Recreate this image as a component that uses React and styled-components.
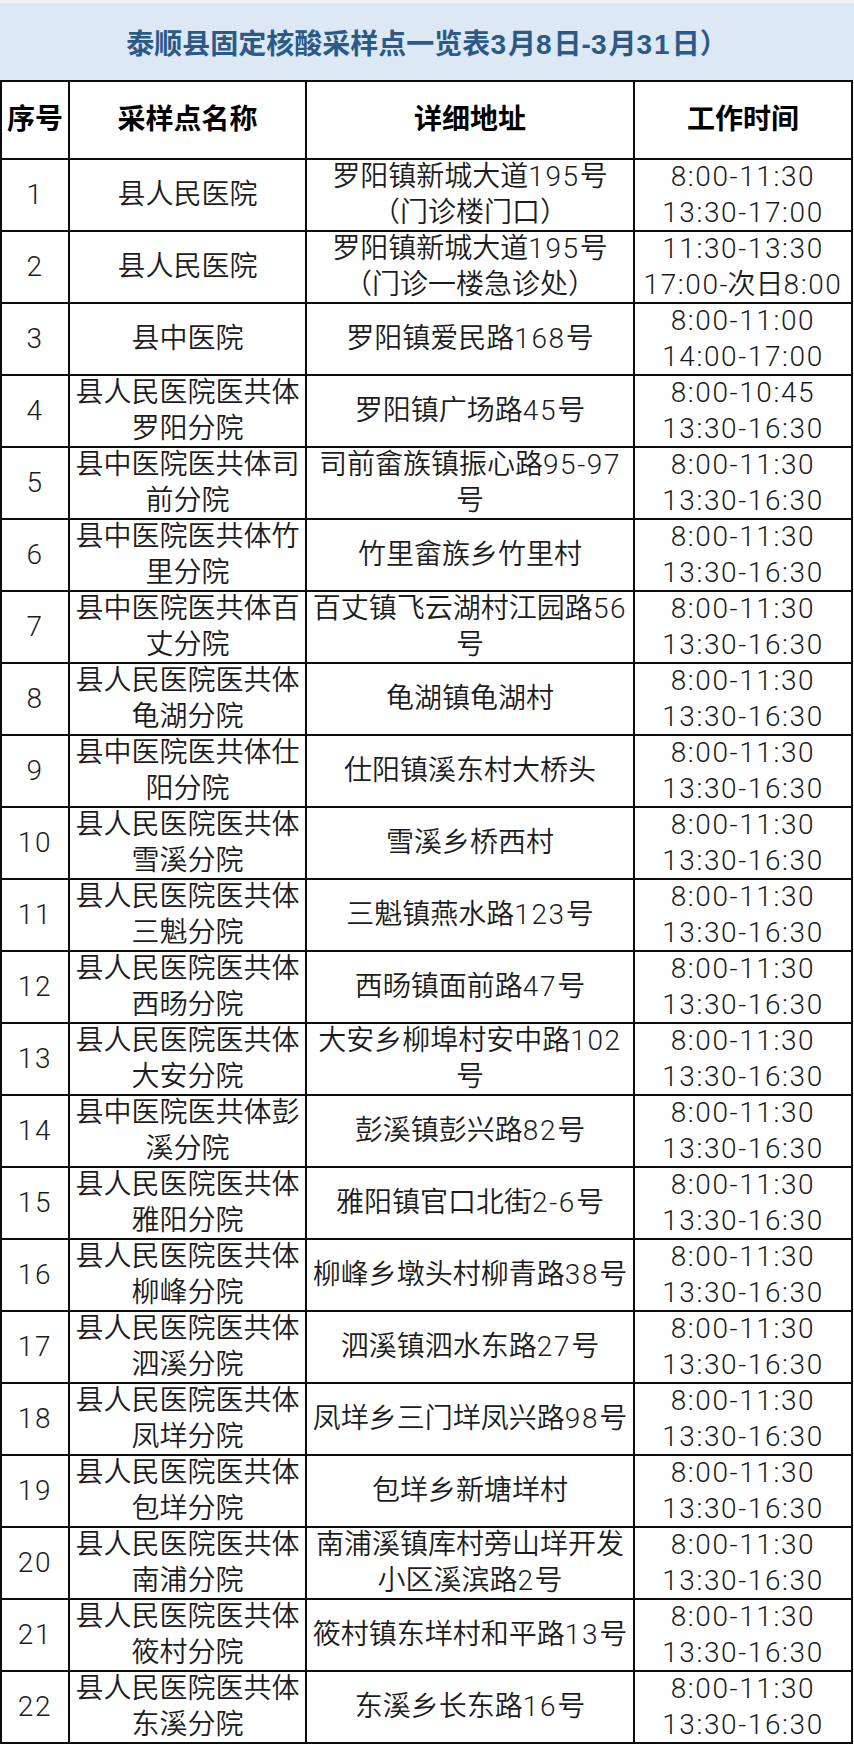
import React from "react";
import styled, { createGlobalStyle } from "styled-components";

const Global = createGlobalStyle`
  html, body { margin: 0; padding: 0; background: #ffffff; }
  body { font-family: "Liberation Sans", "Noto Sans CJK SC", sans-serif; }
`;

const Page = styled.div`
  width: 854px;
  background: #ffffff;
  padding-bottom: 3px;
`;

const TitleBar = styled.div`
  height: 77px;
  border-top: 3px solid #edf3f9;
  background: #dce8f4;
  display: flex;
  align-items: center;
  justify-content: center;
`;

const Title = styled.h1`
  margin: 0;
  font-family: "Liberation Sans", "Noto Sans CJK SC", sans-serif;
  font-size: 28px;
  font-weight: 700;
  color: #2c5a86;
  white-space: nowrap;
`;

const Grid = styled.div`
  width: 849px;
  display: grid;
  grid-template-columns: 66px 235px 326px 216px;
  grid-template-rows: 76px;
  grid-auto-rows: 70px;
  gap: 2px;
  padding: 2px;
  background: #0d0d0d;
`;

const Cell = styled.div`
  background: #ffffff;
  display: flex;
  flex-direction: column;
  align-items: center;
  justify-content: center;
  text-align: center;
  font-family: "Roboto", "Liberation Sans", "Noto Sans CJK SC", sans-serif;
  font-size: 28px;
  font-weight: ${(p) => (p.$head ? 700 : 350)};
  color: ${(p) => (p.$head ? "#000000" : "#1c1c1c")};
  line-height: 36px;
  overflow: hidden;
`;

const Line = styled.span`
  display: block;
  white-space: nowrap;
`;

const Num = styled.span`
  letter-spacing: ${(p) => p.$gap || "1.6px"};
`;

const T1 = ["8:00-11:30", "13:30-16:30"];

const rows = [
  [["县人民医院"], ["罗阳镇新城大道195号", "（门诊楼门口）"], ["8:00-11:30", "13:30-17:00"]],
  [["县人民医院"], ["罗阳镇新城大道195号", "（门诊一楼急诊处）"], ["11:30-13:30", "17:00-次日8:00"]],
  [["县中医院"], ["罗阳镇爱民路168号"], ["8:00-11:00", "14:00-17:00"]],
  [["县人民医院医共体", "罗阳分院"], ["罗阳镇广场路45号"], ["8:00-10:45", "13:30-16:30"]],
  [["县中医院医共体司", "前分院"], ["司前畲族镇振心路95-97", "号"], T1],
  [["县中医院医共体竹", "里分院"], ["竹里畲族乡竹里村"], T1],
  [["县中医院医共体百", "丈分院"], ["百丈镇飞云湖村江园路56", "号"], T1],
  [["县人民医院医共体", "龟湖分院"], ["龟湖镇龟湖村"], T1],
  [["县中医院医共体仕", "阳分院"], ["仕阳镇溪东村大桥头"], T1],
  [["县人民医院医共体", "雪溪分院"], ["雪溪乡桥西村"], T1],
  [["县人民医院医共体", "三魁分院"], ["三魁镇燕水路123号"], T1],
  [["县人民医院医共体", "西旸分院"], ["西旸镇面前路47号"], T1],
  [["县人民医院医共体", "大安分院"], ["大安乡柳埠村安中路102", "号"], T1],
  [["县中医院医共体彭", "溪分院"], ["彭溪镇彭兴路82号"], T1],
  [["县人民医院医共体", "雅阳分院"], ["雅阳镇官口北街2-6号"], T1],
  [["县人民医院医共体", "柳峰分院"], ["柳峰乡墩头村柳青路38号"], T1],
  [["县人民医院医共体", "泗溪分院"], ["泗溪镇泗水东路27号"], T1],
  [["县人民医院医共体", "凤垟分院"], ["凤垟乡三门垟凤兴路98号"], T1],
  [["县人民医院医共体", "包垟分院"], ["包垟乡新塘垟村"], T1],
  [["县人民医院医共体", "南浦分院"], ["南浦溪镇库村旁山垟开发", "小区溪滨路2号"], T1],
  [["县人民医院医共体", "筱村分院"], ["筱村镇东垟村和平路13号"], T1],
  [["县人民医院医共体", "东溪分院"], ["东溪乡长东路16号"], T1],
];

const Text = ({ value, gap }) =>
  String(value)
    .split(/(\d[\d:\-]*\d|\d)/)
    .filter((s) => s !== "")
    .map((s, i) =>
      /^\d/.test(s) ? (
        <Num key={i} $gap={gap}>{s}</Num>
      ) : (
        <React.Fragment key={i}>{s}</React.Fragment>
      )
    );

const Lines = ({ items }) =>
  items.map((t, i) => (
    <Line key={i}>
      <Text value={t} />
    </Line>
  ));

export default function App() {
  return (
    <Page>
      <Global />
      <TitleBar>
        <Title>
          <Text value="泰顺县固定核酸采样点一览表3月8日-3月31日）" gap="2px" />
        </Title>
      </TitleBar>
      <Grid>
        <Cell $head>序号</Cell>
        <Cell $head>采样点名称</Cell>
        <Cell $head>详细地址</Cell>
        <Cell $head>工作时间</Cell>
        {rows.map(([name, addr, time], i) => (
          <React.Fragment key={i}>
            <Cell><Line><Text value={i + 1} /></Line></Cell>
            <Cell><Lines items={name} /></Cell>
            <Cell><Lines items={addr} /></Cell>
            <Cell><Lines items={time} /></Cell>
          </React.Fragment>
        ))}
      </Grid>
    </Page>
  );
}
